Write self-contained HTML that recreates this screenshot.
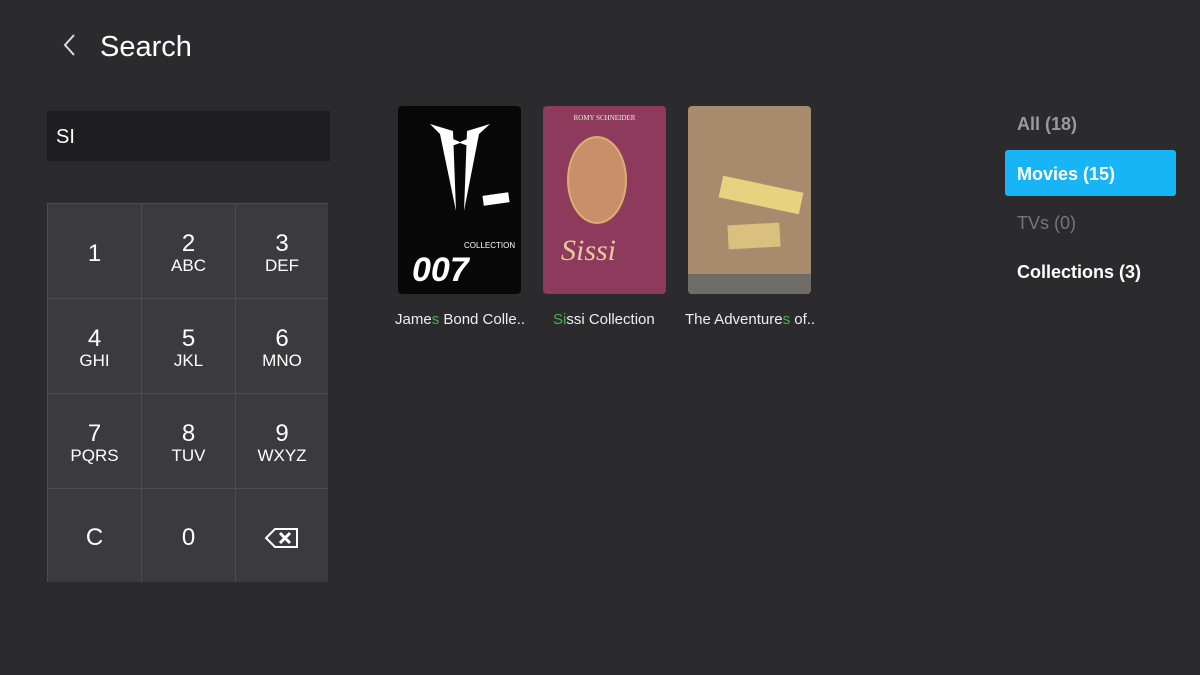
<!DOCTYPE html>
<html><head><meta charset="utf-8"><style>
*{margin:0;padding:0;box-sizing:border-box}
body{width:1200px;height:675px;background:#2b2b2d;font-family:"Liberation Sans",sans-serif;color:#fff;position:relative;overflow:hidden}
.abs{position:absolute}
.title{left:100px;top:31px;font-size:29px}
.back{left:62px;top:33px}
.input{left:47px;top:111px;width:283px;height:50px;background:#1e1e20;font-size:20px;padding:15px 0 0 9px}
.pad{left:47px;top:203px;width:281px;height:379px;background:#4c4c50;display:grid;grid-template-columns:93px 93px 92px;grid-template-rows:94px 94px 94px 93px;gap:1px;padding:1px}
.k{background:#3b3b3f;display:flex;flex-direction:column;align-items:center;justify-content:center;font-size:24px;line-height:25px;padding-top:4px}
.k span{font-size:17px;line-height:20px}
.poster{top:106px;width:123px;height:188px;border-radius:4px;overflow:hidden}
.cap{top:311px;font-size:15px;color:#eee}
.g{color:#4caf50}
.tab{left:1017px;font-size:18px;font-weight:bold}
</style></head><body>
<svg class="abs back" width="16" height="24" viewBox="0 0 16 24"><path d="M12 2 L3 12 L12 22" stroke="#ddd" stroke-width="2" fill="none"/></svg>
<div class="abs title">Search</div>
<div class="abs input">SI</div>
<div class="abs pad">
<div class="k">1</div><div class="k">2<span>ABC</span></div><div class="k">3<span>DEF</span></div>
<div class="k">4<span>GHI</span></div><div class="k">5<span>JKL</span></div><div class="k">6<span>MNO</span></div>
<div class="k">7<span>PQRS</span></div><div class="k">8<span>TUV</span></div><div class="k">9<span>WXYZ</span></div>
<div class="k">C</div><div class="k">0</div>
<div class="k"><svg width="36" height="24" viewBox="0 0 36 24"><path d="M2 12 L11 3 H33 V21 H11 Z" stroke="#fff" stroke-width="2" fill="none"/><path d="M16 7 L26 17 M26 7 L16 17" stroke="#fff" stroke-width="3"/></svg></div>
</div>
<div class="abs poster" style="left:398px;background:#080808">
<svg width="123" height="188"><path d="M32 18 L42 28 L58 105 L55 25 Z" fill="#fff"/><path d="M92 18 L81 28 L66 105 L69 25 Z" fill="#fff"/><path d="M48 30 L62 36 L76 30 L76 42 L62 37 L48 42 Z" fill="#fff"/><rect x="85" y="88" width="26" height="10" fill="#fff" transform="rotate(-8 98 93)"/><text x="14" y="175" font-size="34" font-style="italic" font-weight="bold" fill="#fff" font-family="Liberation Sans">007</text><text x="66" y="142" font-size="8" fill="#fff">COLLECTION</text></svg>
</div>
<div class="abs poster" style="left:543px;background:#8d3a5c">
<div class="abs" style="left:24px;top:30px;width:60px;height:88px;border-radius:50%;background:#c98f6b;border:2px solid #d8b070"></div>
<div class="abs" style="left:18px;top:128px;font-family:'Liberation Serif';font-style:italic;font-size:30px;color:#e8c8a0">Sissi</div>
<div class="abs" style="left:0;top:8px;width:123px;text-align:center;font-family:'Liberation Serif';font-size:7px;color:#eed">ROMY SCHNEIDER</div>
</div>
<div class="abs poster" style="left:688px;background:#a88a6c">
<div class="abs" style="left:32px;top:78px;width:82px;height:22px;background:#e7d280;transform:rotate(12deg)"></div>
<div class="abs" style="left:40px;top:118px;width:52px;height:24px;background:#d9c07e;transform:rotate(-3deg)"></div>
<div class="abs" style="left:0;top:168px;width:123px;height:20px;background:#6f6b66"></div>
</div>
<div class="abs cap" style="left:395px">Jame<span class="g">s</span> Bond Colle..</div>
<div class="abs cap" style="left:553px"><span class="g">Si</span>ssi Collection</div>
<div class="abs cap" style="left:685px">The Adventure<span class="g">s</span> of..</div>
<div class="abs tab" style="top:114px;color:#9a9a9c">All (18)</div>
<div class="abs" style="left:1005px;top:150px;width:171px;height:46px;background:#17b4f6;border-radius:3px"></div>
<div class="abs tab" style="top:164px;color:#fff">Movies (15)</div>
<div class="abs tab" style="top:213px;color:#777;font-weight:normal">TVs (0)</div>
<div class="abs tab" style="top:262px;color:#fff">Collections (3)</div>
</body></html>
